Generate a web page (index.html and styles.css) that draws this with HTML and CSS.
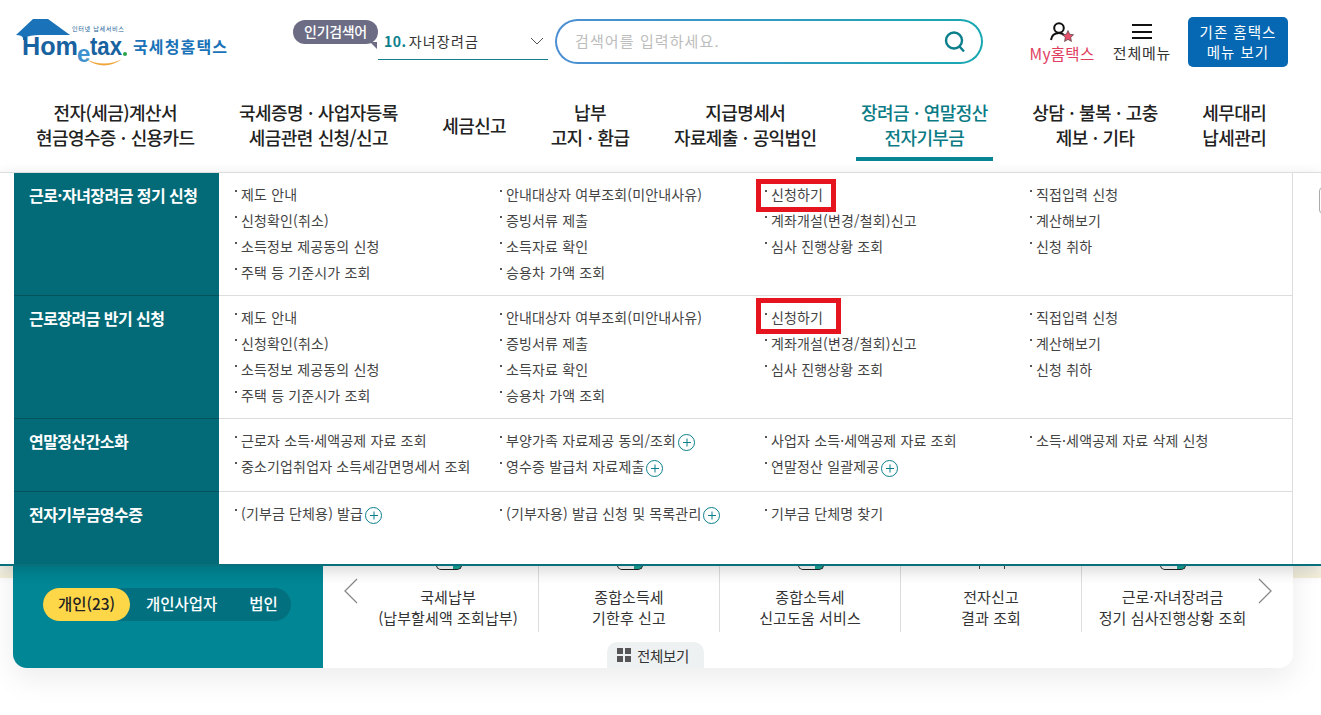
FILE: index.html
```html
<!DOCTYPE html>
<html lang="ko">
<head>
  <meta charset="UTF-8">
  <meta name="viewport" content="width=device-width, initial-scale=1.0">
  <title>국세청 홈택스</title>
  <link rel="stylesheet" href="styles.css">
</head>
<body>
  <!-- Top bar -->
  <header class="top-bar">
    <a class="logo" href="#">
      <svg width="215" height="52" viewBox="15 17 215 52">
        <path d="M16 35 L33 19 H48 L70 35 H40 Q29 35 25 38 V40 H23 V38 Q22 35 16 35 Z" fill="#1a72b8"/>
        <text x="72" y="31" class="logo-tiny" textLength="52">인터넷 납세서비스</text>
        <text x="22" y="55" class="logo-word" textLength="56" lengthAdjust="spacingAndGlyphs">Hom</text>
        <text x="77" y="62" class="logo-e" textLength="13">e</text>
        <text x="90" y="55" class="logo-word" textLength="32" lengthAdjust="spacingAndGlyphs">tax</text>
        <circle cx="125" cy="54" r="2" fill="#2aa34a"/>
        <path d="M86 59 Q104 72 122 59 Q104 68 86 59 Z" fill="#f0a63c"/>
        <text x="133" y="53" class="logo-name" textLength="94">국세청홈택스</text>
      </svg>
    </a>

    <div class="popular">
      <span class="popular-badge">인기검색어</span>
      <div class="popular-select">
        <span><b>10.</b> 자녀장려금</span>
        <svg width="14" height="8" viewBox="0 0 14 8"><path d="M1 1 L7 7 L13 1" fill="none" stroke="#555" stroke-width="1"/></svg>
      </div>
    </div>

    <div class="search-box">
      <div class="search-inner">
        <span class="search-hint">검색어를 입력하세요.</span>
        <svg width="24" height="24" viewBox="0 0 24 24"><circle cx="11" cy="10.5" r="8" fill="none" stroke="#0b7f8c" stroke-width="2.4"/><path d="M16.5 16.5 L21 21.5" stroke="#0b7f8c" stroke-width="2.4"/></svg>
      </div>
    </div>

    <a class="top-link my-link" href="#">
      <svg width="26" height="24" viewBox="0 0 26 24">
        <circle cx="10" cy="8" r="4.8" fill="none" stroke="#111" stroke-width="2"/>
        <path d="M2 20 Q3 13 10 13 Q13 13 15 15" fill="none" stroke="#111" stroke-width="2"/>
        <path d="M19 10.5 L20.7 14.3 L24.6 14.7 L21.7 17.4 L22.5 21.5 L19 19.4 L15.5 21.5 L16.3 17.4 L13.4 14.7 L17.3 14.3 Z" fill="#e9506c" stroke="#333" stroke-width=".6"/>
      </svg>
      <span>My홈택스</span>
    </a>
    <a class="top-link all-link" href="#">
      <span class="burger"></span>
      <span>전체메뉴</span>
    </a>
    <a class="old-menu" href="#">기존 홈택스<br>메뉴 보기</a>
  </header>

  <!-- Main navigation -->
  <nav class="main-nav">
    <a href="#">전자(세금)계산서<br>현금영수증 · 신용카드</a>
    <a href="#">국세증명 · 사업자등록<br>세금관련 신청/신고</a>
    <a href="#">세금신고</a>
    <a href="#">납부<br>고지 · 환급</a>
    <a href="#">지급명세서<br>자료제출 · 공익법인</a>
    <a href="#" class="active">장려금 · 연말정산<br>전자기부금</a>
    <a href="#">상담 · 불복 · 고충<br>제보 · 기타</a>
    <a href="#">세무대리<br>납세관리</a>
  </nav>

  <main class="content">
    <div class="hero"></div>

    <section class="quick">
      <div class="quick-side">
        <div class="user-tabs">
          <span class="user-tab on">개인(23)</span>
          <span class="user-tab">개인사업자</span>
          <span class="user-tab">법인</span>
        </div>
      </div>
      <div class="quick-main">
        <svg class="arrow" width="16" height="26" viewBox="0 0 16 26"><path d="M14 1 L2 13 L14 25" fill="none" stroke="#888" stroke-width="1.3"/></svg>
        <ul class="quick-list">
          <li><span class="quick-icon"></span>국세납부<br>(납부할세액 조회납부)</li>
          <li><span class="quick-icon"></span>종합소득세<br>기한후 신고</li>
          <li><span class="quick-icon"></span>종합소득세<br>신고도움 서비스</li>
          <li><span class="quick-icon thin"></span>전자신고<br>결과 조회</li>
          <li><span class="quick-icon"></span>근로·자녀장려금<br>정기 심사진행상황 조회</li>
        </ul>
        <svg class="arrow" width="16" height="26" viewBox="0 0 16 26"><path d="M2 1 L14 13 L2 25" fill="none" stroke="#888" stroke-width="1.3"/></svg>
        <a class="see-all" href="#"><span class="see-all-icon"><i></i><i></i><i></i><i></i></span>전체보기</a>
      </div>
    </section>

    <!-- Open dropdown of the active menu -->
    <div class="dropdown">
      <div class="drop-table">
        <div class="drop-row tall">
          <h3>근로·자녀장려금 정기 신청</h3>
          <ul>
            <li>제도 안내</li>
            <li>안내대상자 여부조회(미안내사유)</li>
            <li class="marked"><span class="red-box"></span>신청하기</li>
            <li>직접입력 신청</li>
            <li>신청확인(취소)</li>
            <li>증빙서류 제출</li>
            <li>계좌개설(변경/철회)신고</li>
            <li>계산해보기</li>
            <li>소득정보 제공동의 신청</li>
            <li>소득자료 확인</li>
            <li>심사 진행상황 조회</li>
            <li>신청 취하</li>
            <li>주택 등 기준시가 조회</li>
            <li>승용차 가액 조회</li>
          </ul>
        </div>
        <div class="drop-row tall">
          <h3>근로장려금 반기 신청</h3>
          <ul>
            <li>제도 안내</li>
            <li>안내대상자 여부조회(미안내사유)</li>
            <li class="marked"><span class="red-box wide"></span>신청하기</li>
            <li>직접입력 신청</li>
            <li>신청확인(취소)</li>
            <li>증빙서류 제출</li>
            <li>계좌개설(변경/철회)신고</li>
            <li>계산해보기</li>
            <li>소득정보 제공동의 신청</li>
            <li>소득자료 확인</li>
            <li>심사 진행상황 조회</li>
            <li>신청 취하</li>
            <li>주택 등 기준시가 조회</li>
            <li>승용차 가액 조회</li>
          </ul>
        </div>
        <div class="drop-row short">
          <h3>연말정산간소화</h3>
          <ul>
            <li>근로자 소득·세액공제 자료 조회</li>
            <li>부양가족 자료제공 동의/조회<i class="plus"></i></li>
            <li>사업자 소득·세액공제 자료 조회</li>
            <li>소득·세액공제 자료 삭제 신청</li>
            <li>중소기업취업자 소득세감면명세서 조회</li>
            <li>영수증 발급처 자료제출<i class="plus"></i></li>
            <li>연말정산 일괄제공<i class="plus"></i></li>
          </ul>
        </div>
        <div class="drop-row short">
          <h3>전자기부금영수증</h3>
          <ul>
            <li>(기부금 단체용) 발급<i class="plus"></i></li>
            <li>(기부자용) 발급 신청 및 목록관리<i class="plus"></i></li>
            <li>기부금 단체명 찾기</li>
          </ul>
        </div>
      </div>
      <span class="side-tab"></span>
    </div>
  </main>
</body>
</html>
```

FILE: styles.css
```css
* {
  box-sizing: border-box;
}

html, body {
  height: 715px;
  overflow: hidden;
}

body {
  margin: 0;
  background: #fff;
  color: #333;
  font-family: "Noto Sans CJK KR", "Noto Sans", sans-serif;
  font-size: 14px;
}

a {
  color: inherit;
  text-decoration: none;
}

ul {
  list-style: none;
  margin: 0;
  padding: 0;
}

/* top bar */
.top-bar {
  display: flex;
  align-items: flex-start;
  height: 85px;
  padding: 17px 0 0 15px;
}

.logo {
  display: block;
  width: 215px;
  height: 52px;
}

.logo-tiny {
  font-size: 6.2px;
  fill: #1d5f99;
}

.logo-word {
  font-family: "Liberation Sans", sans-serif;
  font-size: 25px;
  font-weight: 700;
  fill: #17629f;
}

.logo-e {
  font-family: "Liberation Sans", sans-serif;
  font-size: 24px;
  font-weight: 700;
  fill: #3d92cf;
}

.logo-name {
  font-size: 16px;
  font-weight: 700;
  fill: #1a72b8;
}

.popular {
  position: relative;
  width: 255px;
  height: 43px;
  margin-left: 63px;
}

.popular-badge {
  position: absolute;
  top: 3px;
  left: 0;
  width: 85px;
  height: 24px;
  border-radius: 12px;
  background: #6c6c85;
  color: #fff;
  font-size: 14px;
  font-weight: 500;
  line-height: 23px;
  text-align: center;
  letter-spacing: -0.3px;
}

.popular-badge::after {
  content: "";
  position: absolute;
  right: 1px;
  bottom: -5px;
  border-top: 7px solid #6c6c85;
  border-left: 7px solid transparent;
}

.popular-select {
  display: flex;
  align-items: center;
  justify-content: space-between;
  position: absolute;
  top: 8px;
  left: 85px;
  width: 170px;
  height: 35px;
  padding: 0 4px 3px 6px;
  border-bottom: 1px solid #127f8d;
  font-size: 14px;
  letter-spacing: 1.2px;
  word-spacing: -3px;
}

.popular-select b {
  color: #0d7f8c;
  font-weight: 700;
  letter-spacing: 0.5px;
}

.search-box {
  width: 428px;
  height: 45px;
  margin: 2px 0 0 7px;
  padding: 2px;
  border-radius: 23px;
  background: linear-gradient(90deg, #4c8fd3, #17a8b0);
}

.search-inner {
  display: flex;
  align-items: center;
  justify-content: space-between;
  height: 41px;
  padding: 0 14px 0 18px;
  border-radius: 21px;
  background: #fff;
}

.search-hint {
  margin-bottom: 3px;
  color: #bdbdbd;
  font-size: 15px;
  letter-spacing: 1.1px;
}

.top-link {
  display: flex;
  flex-direction: column;
  align-items: center;
  font-size: 15px;
  line-height: 20px;
  white-space: nowrap;
}

.my-link {
  width: 68px;
  height: 46px;
  margin: 3px 0 0 45px;
  color: #e0405f;
  font-size: 15.5px;
  letter-spacing: 0.3px;
}

.my-link svg {
  flex: none;
  margin-bottom: -1px;
}

.all-link {
  width: 60px;
  height: 46px;
  margin: 3px 0 0 16px;
  color: #333;
  letter-spacing: 0.8px;
}

.burger {
  flex: none;
  width: 20px;
  height: 15px;
  margin: 4px 0;
  border-top: 2px solid #111;
  border-bottom: 2px solid #111;
  background: linear-gradient(#111, #111) center / 100% 2px no-repeat;
}

.old-menu {
  width: 100px;
  height: 50px;
  margin-left: 16px;
  padding-top: 5px;
  border-radius: 5px;
  background: #0668b3;
  color: #fff;
  font-size: 14.5px;
  line-height: 20px;
  text-align: center;
  letter-spacing: 1px;
}

/* main nav */
.main-nav {
  display: flex;
  gap: 34.6px;
  height: 87px;
  padding: 16px 0 0 31px;
}

.main-nav a {
  display: flex;
  align-items: center;
  height: 60px;
  padding: 0 5px 8px;
  border-bottom: 4px solid transparent;
  color: #222;
  font-size: 18px;
  font-weight: 500;
  line-height: 25px;
  text-align: center;
  letter-spacing: -0.6px;
  word-spacing: 0.6px;
  white-space: nowrap;
}

.main-nav a.active {
  border-bottom-color: #078593;
  color: #0a7b85;
}

/* content below nav */
.content {
  position: relative;
}

.hero {
  height: 406px;
  background: linear-gradient(#fff 385px, #f5f0da);
}

.quick {
  display: flex;
  width: 1280px;
  height: 128px;
  margin: -38px 0 0 13px;
  position: relative;
  border-radius: 0 0 14px 14px;
  background: #fff;
  box-shadow: 0 10px 30px rgba(0, 0, 0, 0.08);
}

.quick-side {
  width: 310px;
  padding: 48px 0 0 30px;
  border-radius: 0 0 0 14px;
  background: #008695;
}

.user-tabs {
  display: flex;
  width: 248px;
  height: 33px;
  border-radius: 17px;
  background: #03707f;
  color: #fff;
  font-size: 15.5px;
  font-weight: 500;
  line-height: 31px;
}

.user-tab {
  flex: none;
  padding: 0 16px;
  white-space: nowrap;
}

.user-tab.on {
  width: 87px;
  padding: 0;
  border-radius: 17px;
  background: #fdd748;
  color: #222;
  text-align: center;
}

.quick-main {
  position: relative;
  display: flex;
  align-items: flex-start;
  flex: 1;
  padding: 38px 20px 0;
}

.arrow {
  flex: none;
}

.quick-list {
  display: flex;
  position: absolute;
  top: 0;
  left: 35px;
}

.quick-list li {
  position: relative;
  width: 181px;
  height: 92px;
  padding-top: 46px;
  border-right: 1px solid #ddd;
  font-size: 15px;
  line-height: 21px;
  text-align: center;
  letter-spacing: 0.1px;
  white-space: nowrap;
}

.quick-list li:last-child {
  border-right: 0;
}

.quick-icon {
  position: absolute;
  top: 20px;
  left: 78px;
  width: 26px;
  height: 10px;
  border: 1.5px solid #222;
  border-top: 0;
  border-radius: 0 0 5px 5px;
  background: linear-gradient(90deg, #fff 65%, #16a596 65%);
}

.quick-icon.thin {
  height: 9px;
  border: 0;
  border-left: 1.5px solid #444;
  border-right: 1.5px solid #444;
  border-radius: 0;
  background: none;
}

.arrow:last-of-type {
  margin-left: auto;
}

.see-all {
  position: absolute;
  bottom: 0;
  left: 284px;
  display: flex;
  align-items: center;
  gap: 6px;
  width: 97px;
  height: 26px;
  padding-left: 10px;
  border-radius: 10px 10px 0 0;
  background: #eef1f2;
  font-size: 14.5px;
  letter-spacing: -0.3px;
}

.see-all-icon {
  display: grid;
  grid-template-columns: 6px 6px;
  gap: 2px;
}

.see-all-icon i {
  height: 6px;
  background: #555;
}

/* dropdown */
.dropdown {
  position: absolute;
  top: 0;
  left: 0;
  width: 100%;
  height: 394px;
  background: #fff;
  border-top: 1px solid #ddd;
  border-bottom: 2px solid #08707c;
  box-shadow: 0 5px 14px rgba(0, 0, 0, 0.16);
}

.drop-table {
  width: 1279px;
  height: 100%;
  margin-left: 14px;
  border-right: 1px solid #ddd;
}

.drop-row {
  display: flex;
  border-bottom: 1px solid #ddd;
}

.drop-row:last-child {
  border-bottom: 0;
}

.tall {
  height: 123px;
}

.short {
  height: 73px;
}

.short:last-child {
  height: 72px;
}

.drop-row h3 {
  flex: none;
  width: 205px;
  margin: 0;
  padding: 10px 0 0 15px;
  border-bottom: 1px solid #04525c;
  margin-bottom: -1px;
  background: #026b77;
  color: #fff;
  font-size: 16px;
  font-weight: 700;
  line-height: 24px;
  letter-spacing: -0.55px;
  white-space: nowrap;
}

.drop-row:last-child h3 {
  border-bottom: 0;
  margin-bottom: 0;
}

.drop-row ul {
  display: grid;
  grid-template-columns: repeat(4, 265px);
  grid-auto-rows: 26px;
  padding: 8px 0 0 15px;
}

.drop-row li {
  position: relative;
  display: flex;
  align-items: center;
  padding-left: 7px;
  color: #444;
  font-size: 14px;
  letter-spacing: 0.15px;
  white-space: nowrap;
}

.drop-row li::before {
  content: "";
  position: absolute;
  top: 9px;
  left: 1px;
  width: 2px;
  height: 2px;
  background: #555;
}

.plus {
  position: relative;
  flex: none;
  width: 17px;
  height: 17px;
  margin: 5px 0 0 2px;
  border: 1px solid #0b7f8c;
  border-radius: 50%;
}

.plus::before,
.plus::after {
  content: "";
  position: absolute;
  top: 7px;
  left: 3.5px;
  width: 8px;
  height: 1px;
  background: #0b7f8c;
}

.plus::after {
  transform: rotate(90deg);
}

/* red annotation boxes drawn over the items */
.red-box {
  position: absolute;
  top: -2px;
  left: -8px;
  width: 80px;
  height: 33px;
  border: 5px solid #e5141f;
}

.red-box.wide {
  top: -6px;
  left: -8px;
  width: 85px;
  height: 36px;
}

.side-tab {
  position: absolute;
  top: 14px;
  right: -8px;
  width: 10px;
  height: 27px;
  border: 1px solid #aaa;
  border-radius: 4px;
}
```
